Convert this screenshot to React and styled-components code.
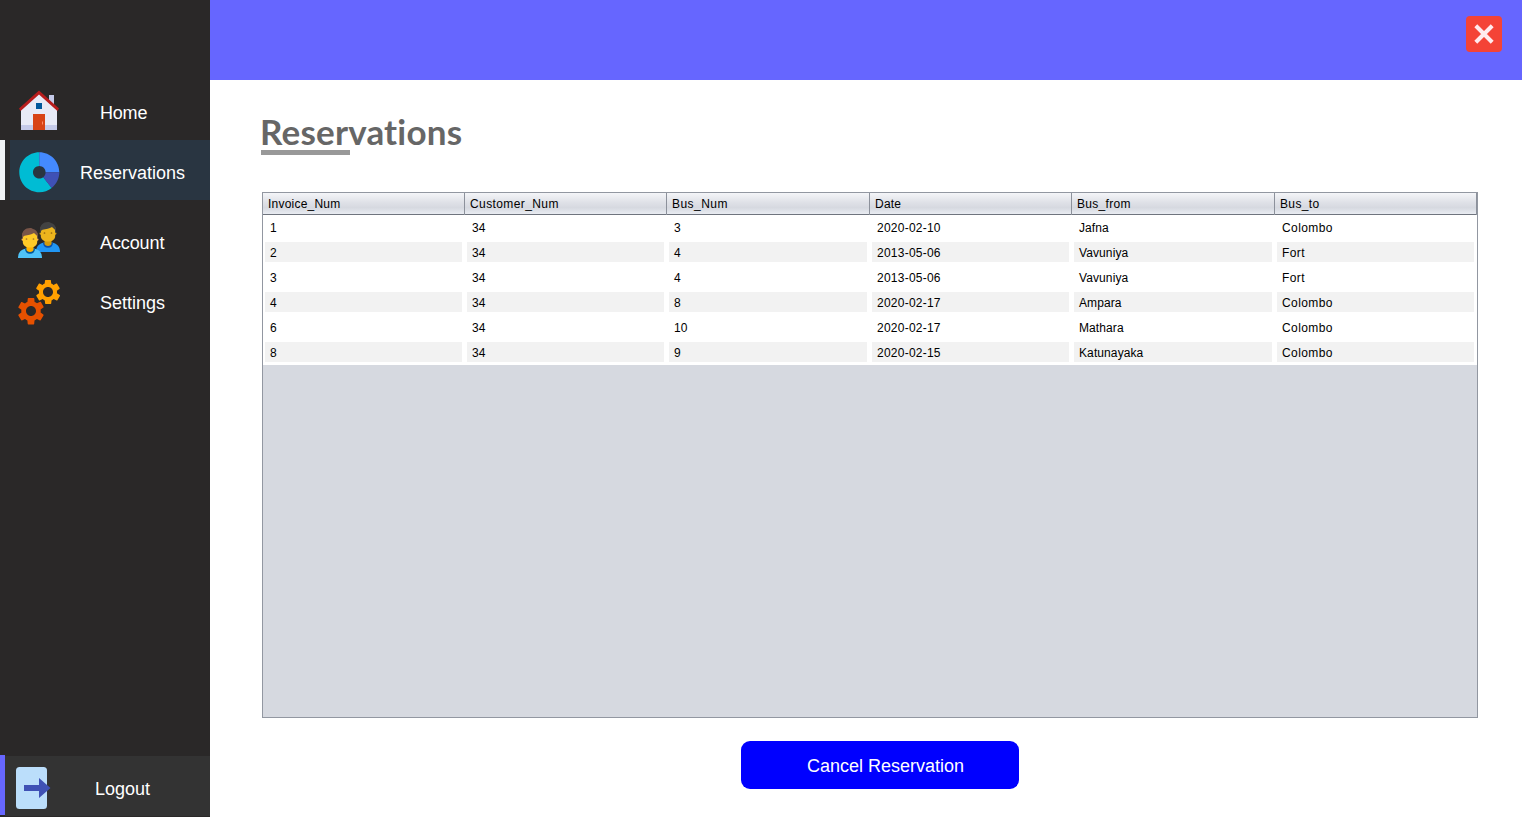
import React from 'react';
import styled, { createGlobalStyle } from 'styled-components';
import { FcDoughnutChart, FcServices } from 'react-icons/fc';

const GlobalStyle = createGlobalStyle`
  * { box-sizing: border-box; }
  body { margin: 0; background: #fff; font-family: 'Liberation Sans', Arial, sans-serif; }
`;

const Window = styled.div`
  display: grid;
  grid-template-columns: 210px 1fr;
  width: 1522px;
  height: 817px;
  overflow: hidden;
`;

const Sidebar = styled.nav`
  display: flex;
  flex-direction: column;
  background: #2a2828;
  padding: 80px 0 2px;
`;

const NavItem = styled.a`
  display: flex;
  height: 60px;
  flex: none;
  margin-top: ${(p) => p.$gap || 0}px;
  border-left: 5px solid ${(p) => p.$mark || 'transparent'};
  color: #fff;
  font-size: 18px;
  line-height: 20px;
`;

const NavBody = styled.div`
  flex: 1;
  display: flex;
  margin-left: ${(p) => p.$inset || 0}px;
  margin-top: ${(p) => p.$top || 0}px;
  margin-bottom: ${(p) => (p.$top ? -p.$top : 0)}px;
  background: ${(p) => p.$bg || 'transparent'};
`;

const NavIcon = styled.span`
  flex: none;
  width: 60px;
  height: 60px;
  margin-left: ${(p) => -5 - (p.$inset || 0)}px;
  svg { display: block; }
`;

const NavLabel = styled.span`
  padding-top: 23px;
  margin-left: ${(p) => p.$x - 60}px;
  letter-spacing: ${(p) => p.$tracking || 0}px;
  white-space: nowrap;
`;

const Spacer = styled.div`
  flex: 1;
`;

const IconPad = styled.span`
  display: block;
  padding: ${(p) => p.$pad};
`;

const Main = styled.main`
  display: flex;
  flex-direction: column;
`;

const TopBar = styled.header`
  display: flex;
  justify-content: flex-end;
  height: 80px;
  flex: none;
  padding: 16px 20px;
  background: #6666ff;
`;

const CloseButton = styled.button`
  width: 36px;
  height: 36px;
  padding: 0;
  border: 0;
  border-radius: 4px;
  background: #f44336;
  svg { display: block; }
`;

const Content = styled.section`
  display: flex;
  flex-direction: column;
  padding: 30px 44px 0 51px;
`;

const Title = styled.h1`
  margin: 0 0 0 -1px;
  height: 40px;
  line-height: 43px;
  font-family: Lato, sans-serif;
  font-weight: 700;
  font-size: 35px;
  letter-spacing: 0.2px;
  color: #666;
`;

const Underline = styled.div`
  width: 89px;
  height: 5px;
  background: #999;
`;

const Table = styled.div`
  width: 1216px;
  height: 526px;
  margin: 37px 0 0 1px;
  border: 1px solid #9297a1;
  background: #d6d9e0;
`;

const Row = styled.div`
  display: grid;
  grid-template-columns: 202px 202px 203px 202px 203px 202px;
  font-size: 12px;
  color: #000;
`;

const HeadRow = styled(Row)`
  height: 22px;
  border-bottom: 1px solid #6f747e;
  background: linear-gradient(#f4f5f8 0%, #dfe1e7 45%, #d6d9e0 70%, #e9ecf2 100%);
`;

const HeadCell = styled.div`
  padding-left: 5px;
  line-height: 22px;
  letter-spacing: ${(p) => p.$tracking}px;
  border-right: 1px solid #8c919b;
`;

const DataRow = styled(Row)`
  height: 25px;
  padding: 2px 0 3px;
  background: #fff;
`;

const Cell = styled.div`
  height: 20px;
  margin: 0 3px 0 2px;
  padding-left: 5px;
  line-height: 22px;
  letter-spacing: ${(p) => p.$tracking}px;
  background: ${(p) => (p.$striped ? '#f2f2f2' : '#fff')};
`;

const CancelButton = styled.button`
  width: 278px;
  height: 48px;
  margin: 23px 0 0 480px;
  padding: 2px 0 0 11px;
  border: 0;
  border-radius: 9px;
  background: #0000ff;
  color: #fff;
  font: 18px 'Liberation Sans', Arial, sans-serif;
`;

const HomeIcon = () => (
  <svg width="60" height="60" viewBox="0 0 60 60">
    <path fill="#c5cae9" d="M49 15h5v15h-5z" />
    <path fill="#e8eaf6" d="M39 12.500 21 29.500V45h36V29.500z" />
    <path fill="#c5cae9" d="M21 45h36v5H21z" />
    <path fill="#b71c1c" d="M39 10.600 19 28.400l1.600 2.500L39 14.400l18.400 16.500 1.600-2.500z" />
    <path fill="#d84315" d="M33 34h12v16H33z" />
    <path fill="#01579b" d="M36 23h6v6h-6z" />
    <path fill="#ff8a65" d="M42 41.500h1v3h-1z" />
  </svg>
);

const Person = ({ hair, skin, shade, neck, eyes, shirt, collar }) => (
  <g>
    <path fill={shirt} d="M0 30c0-5 2.500-8.500 8-9.500h8c5.500 1 8 4.500 8 9.500z" />
    <path fill={collar} d="M7 20.500c0 3.500 2 5.200 5 5.200s5-1.700 5-5.200z" />
    <path fill={neck} d="M8.500 17h7v4.500c0 1.500-1.500 2.500-3.500 2.500s-3.500-1-3.500-2.500z" />
    <circle fill={shade} cx="4.800" cy="11.500" r="1.200" />
    <circle fill={shade} cx="19.200" cy="11.500" r="1.200" />
    <path fill={skin} d="M4.800 5h14.400v9c0 3.500-3 5.500-7.200 5.500S4.800 17.500 4.800 14z" />
    <path fill={hair} d="M4 10.500V8c0-5 3-8 8-8 1.500 0 2.300.4 2.800 1C18 1.500 20 4 20 8v2.500l-.8.500V8L16 5C13.500 6.500 10 7 6.500 7.800L4.800 9v2z" />
    <circle fill={eyes} fillOpacity=".8" cx="8.500" cy="11" r=".85" />
    <circle fill={eyes} fillOpacity=".8" cx="15.500" cy="11" r=".85" />
  </g>
);

const AccountIcon = () => (
  <svg width="60" height="60" viewBox="0 0 60 60">
    <g transform="translate(36 12)">
      <Person hair="#424242" skin="#edb51d" shade="#d9a010" neck="#d49b0b" eyes="#80510f" shirt="#2196f3" collar="#0d4fa5" />
    </g>
    <g transform="translate(18 18)">
      <Person hair="#795548" skin="#ffca28" shade="#ffb74d" neck="#ffb300" eyes="#8d5b2a" shirt="#4fc3f7" collar="#01579b" />
    </g>
  </svg>
);

const LogoutIcon = () => (
  <svg width="60" height="60" viewBox="0 0 60 60">
    <rect x="16" y="11" width="31" height="42" rx="3.500" fill="#bbdefb" />
    <path fill="#3f51b5" d="M24 29h15v-7l11.500 10L39 42v-7H24z" />
  </svg>
);

const CloseIcon = () => (
  <svg width="36" height="36" viewBox="0 0 36 36">
    <path d="M9.800 9.800l16.400 16.400M26.200 9.800l-16.400 16.400" stroke="#ffebee" strokeWidth="4.100" fill="none" />
  </svg>
);

const columns = [
  { name: 'Invoice_Num', head: 0.22, body: 0.13 },
  { name: 'Customer_Num', head: 0.4, body: 0.13 },
  { name: 'Bus_Num', head: 0.45, body: 0.13 },
  { name: 'Date', head: 0.22, body: 0.24 },
  { name: 'Bus_from', head: 0.3, body: 0.1 },
  { name: 'Bus_to', head: 0.35, body: 0.42 },
];
const rows = [
  ['1', '34', '3', '2020-02-10', 'Jafna', 'Colombo'],
  ['2', '34', '4', '2013-05-06', 'Vavuniya', 'Fort'],
  ['3', '34', '4', '2013-05-06', 'Vavuniya', 'Fort'],
  ['4', '34', '8', '2020-02-17', 'Ampara', 'Colombo'],
  ['6', '34', '10', '2020-02-17', 'Mathara', 'Colombo'],
  ['8', '34', '9', '2020-02-15', 'Katunayaka', 'Colombo'],
];

export default function App() {
  return (
    <Window>
      <GlobalStyle />
      <Sidebar>
        <NavItem>
          <NavBody>
            <NavIcon><HomeIcon /></NavIcon>
            <NavLabel $x={100} $tracking={-0.2}>Home</NavLabel>
          </NavBody>
        </NavItem>
        <NavItem $mark="#f0f0f0">
          <NavBody $inset={5} $bg="#293541">
            <NavIcon $inset={5}><IconPad $pad="6.700px 0 0 13.700px"><FcDoughnutChart size={50.6} /></IconPad></NavIcon>
            <NavLabel $x={80}>Reservations</NavLabel>
          </NavBody>
        </NavItem>
        <NavItem $gap={10}>
          <NavBody>
            <NavIcon><AccountIcon /></NavIcon>
            <NavLabel $x={100} $tracking={-0.1}>Account</NavLabel>
          </NavBody>
        </NavItem>
        <NavItem>
          <NavBody>
            <NavIcon><IconPad $pad="8px 0 0 15px"><FcServices size={48} /></IconPad></NavIcon>
            <NavLabel $x={100}>Settings</NavLabel>
          </NavBody>
        </NavItem>
        <Spacer />
        <NavItem $mark="#6666ff">
          <NavBody $top={1} $bg="#333333">
            <NavIcon><LogoutIcon /></NavIcon>
            <NavLabel $x={95}>Logout</NavLabel>
          </NavBody>
        </NavItem>
      </Sidebar>
      <Main>
        <TopBar>
          <CloseButton aria-label="Close"><CloseIcon /></CloseButton>
        </TopBar>
        <Content>
          <Title>Reservations</Title>
          <Underline />
          <Table>
            <HeadRow>
              {columns.map((c) => <HeadCell key={c.name} $tracking={c.head}>{c.name}</HeadCell>)}
            </HeadRow>
            {rows.map((r, i) => (
              <DataRow key={r[0]}>
                {r.map((v, j) => (
                  <Cell key={j} $striped={i % 2 === 1} $tracking={columns[j].body}>{v}</Cell>
                ))}
              </DataRow>
            ))}
          </Table>
          <CancelButton>Cancel Reservation</CancelButton>
        </Content>
      </Main>
    </Window>
  );
}
